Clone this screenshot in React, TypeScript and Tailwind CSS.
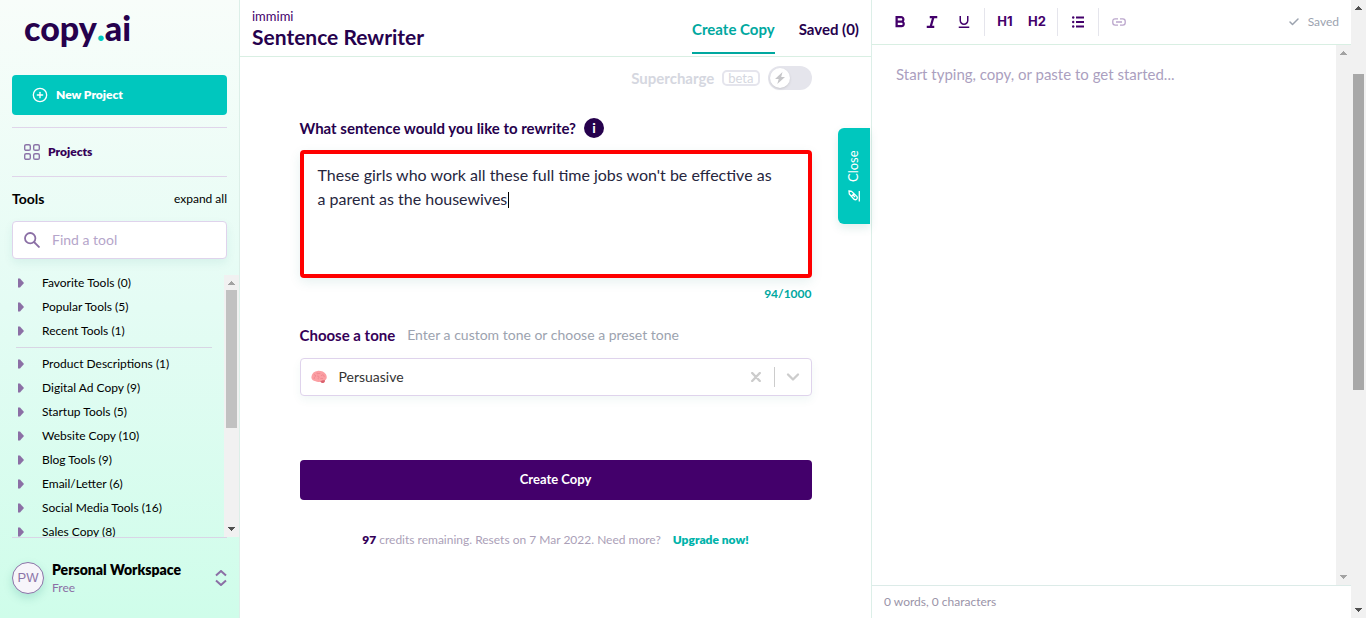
import React from "react";
import { CirclePlus, Check, ChevronDown } from "lucide-react";
import { BiBold, BiItalic, BiUnderline } from "react-icons/bi";

const toolGroups = [
  ["Favorite Tools (0)", "Popular Tools (5)", "Recent Tools (1)"],
  [
    "Product Descriptions (1)",
    "Digital Ad Copy (9)",
    "Startup Tools (5)",
    "Website Copy (10)",
    "Blog Tools (9)",
    "Email/Letter (6)",
    "Social Media Tools (16)",
    "Sales Copy (8)",
  ],
];

function Arrow({ up = false, className }: { up?: boolean; className: string }) {
  return (
    <svg viewBox="0 0 7 4" className={`h-1 w-[7px] ${className}`} shapeRendering="crispEdges" aria-hidden="true">
      <path fill="currentColor" d={up ? "M0 4h7L3.5 0z" : "M0 0h7L3.5 4z"} />
    </svg>
  );
}

function ScrollBar({ children, top, bottom }: { children?: React.ReactNode; top: string; bottom: string }) {
  return (
    <div className="flex w-[15px] shrink-0 flex-col items-center bg-[#f1f1f1]" aria-hidden="true">
      <div className="flex h-[15px] shrink-0 items-center">
        <Arrow up className={top} />
      </div>
      <div className="flex w-full flex-1 flex-col items-center">{children}</div>
      <div className="flex h-4 shrink-0 items-center">
        <Arrow className={bottom} />
      </div>
    </div>
  );
}

function Sidebar() {
  return (
    <aside className="flex w-60 shrink-0 flex-col border-r border-[#dcefe8] bg-linear-to-b from-[#f8fdfa] via-[#e4fcf4] to-[#cffdea]">
      <div className="px-3">
        <a href="#home" className="flex h-[75px] items-start px-3 pt-1.5 text-[34px] leading-[44px] font-black text-[#26014d]" aria-label="copy.ai">
          copy<span className="text-[#00c7be]">.</span>ai
        </a>
        <button className="flex h-10 w-full items-center gap-2 rounded bg-[#00c7be] px-5 text-xs font-extrabold text-white">
          <CirclePlus className="size-4" strokeWidth={2} />
          New Project
        </button>
        <a href="#projects" className="mt-3 flex h-[50px] items-center gap-2 border-y border-[#e0d5ea] px-3 text-xs font-extrabold text-[#350058]">
          <svg viewBox="0 0 16 16" className="size-4 text-[#8b74a8]" fill="none" stroke="currentColor" strokeWidth="1.4" aria-hidden="true">
            <rect x=".7" y=".7" width="5.6" height="5.6" rx="1.4" />
            <rect x="9.7" y=".7" width="5.6" height="5.6" rx="1.4" />
            <rect x=".7" y="9.7" width="5.6" height="5.6" rx="1.4" />
            <rect x="9.7" y="9.7" width="5.6" height="5.6" rx="1.4" />
          </svg>
          Projects
        </a>
        <div className="flex h-11 items-center justify-between text-black">
          <h2 className="text-sm font-bold">Tools</h2>
          <button className="text-xs">expand all</button>
        </div>
        <div className="flex h-[38px] items-center gap-3 rounded border border-[#dfd3ec] bg-white pr-3 pl-[11px] shadow-[0_4px_10px_rgba(0,120,110,0.08)]">
          <svg viewBox="0 0 16 16" className="size-4 shrink-0 text-[#8b6fa5]" fill="none" stroke="currentColor" strokeWidth="1.8" aria-hidden="true">
            <circle cx="6.2" cy="6.2" r="5.2" />
            <path d="m10 10 5.500 5.500" />
          </svg>
          <input type="search" aria-label="Find a tool" placeholder="Find a tool" className="h-full w-full min-w-0 pb-0.5 text-sm outline-none placeholder:text-[#b5a5ca]" />
        </div>
      </div>
      <div className="mt-4 flex min-h-0 flex-1">
        <nav className="flex min-h-0 flex-1 flex-col gap-2 overflow-hidden pr-3 pl-4">
          {toolGroups.map((group, index) => (
            <React.Fragment key={index}>
              {index > 0 && <hr className="border-[#d8d5e4]" />}
              {group.map((tool) => (
                <button key={tool} className="flex h-4 shrink-0 items-center gap-[18px] pl-0.5 text-left text-xs leading-4 text-black">
                  <svg viewBox="0 0 6 10" className="h-[10px] w-[6px] text-[#8b6fa5]" aria-hidden="true">
                    <path fill="currentColor" d="M0 .5h2l4 4.500-4 4.500H0z" />
                  </svg>
                  {tool}
                </button>
              ))}
            </React.Fragment>
          ))}
        </nav>
        <ScrollBar top="text-[#a3a3a3]" bottom="text-[#505050]">
          <div className="h-[138px] w-[11px] bg-[#c1c1c1]" />
        </ScrollBar>
      </div>
      <div className="px-3">
        <button className="flex h-[81px] w-full items-center gap-2 border-t border-[#d9d5e6] text-left">
          <span className="flex size-8 shrink-0 items-center justify-center rounded-full border border-[#8b74a8] bg-[#f7f5fa] font-['Liberation_Sans'] text-[13px] text-[#8b74a8] shadow-[0_4px_10px_rgba(0,120,110,0.18)]">
            PW
          </span>
          <span className="flex flex-1 flex-col">
            <span className="text-sm leading-5 font-extrabold text-black">Personal Workspace</span>
            <span className="text-xs leading-4 text-[#8b6fa5]">Free</span>
          </span>
          <svg viewBox="0 0 12 16" className="h-4 w-3 text-[#8b6fa5]" fill="none" stroke="currentColor" strokeWidth="2" aria-hidden="true">
            <path d="M1 5.500 6 1l5 4.500M1 10.500 6 15l5-4.500" />
          </svg>
        </button>
      </div>
    </aside>
  );
}

function Header() {
  return (
    <header className="flex h-[57px] shrink-0 justify-between border-b border-[#d9efe3] px-3 text-[#26014d]">
      <div className="flex flex-col pt-2">
        <a href="#immimi" className="text-[13px] leading-4 text-[#43006b]">immimi</a>
        <h1 className="text-[21px] leading-[26px] font-bold">Sentence Rewriter</h1>
      </div>
      <nav className="flex h-[54px] gap-6 text-[15px] font-bold">
        <a href="#create" className="flex items-center border-b-2 border-[#00a89f] pt-1.5 text-[#00a89f]">Create Copy</a>
        <a href="#saved" className="flex items-center border-b-2 border-transparent pt-1.5">Saved (0)</a>
      </nav>
    </header>
  );
}

function Brain() {
  return (
    <svg viewBox="0 0 16 14" className="h-[14px] w-4 shrink-0" fill="none" aria-hidden="true">
      <path fill="#fb9fa3" d="M.6 6C1 3.200 3.500 1.200 6.500.9c3.200-.3 6.800.8 8.400 3.400 1.400 2.400 1 5.200-.9 5.900-.1 1.800-1.100 3-2.400 2.800-1.100-.1-1.600-.9-2.400-1.300-1.700.6-3.400.3-4.600-.5C2 11 .300 9.200.4 7.300z" />
      <path stroke="#e5717e" strokeWidth=".5" d="M3 5c1-.8 2 .6 1.300 1.400S2.500 8 3.500 9M6 2.500c-.8 1 .5 1.500 1.200 1.200S9 3 9.300 4M6 6.500c.8-1 2-.3 2 .6S6.500 8.500 7.500 9.300M10 6c.8-.7 1-1.500 2.200-1.100s.6 1.700 1.300 2.100M9.500 8.500c.8-.5 1.500.3 2.500 0" />
      <path fill="#d9626f" d="M9.200 11.700c1.300-1.300 3-1.700 4.800-1.500-.1 1.800-1.100 3-2.400 2.800-1.100-.1-1.600-.9-2.400-1.300z" />
    </svg>
  );
}

function CopyForm() {
  return (
    <main className="relative flex min-w-0 flex-1 flex-col">
      <Header />
      <form className="mx-auto flex w-full max-w-lg flex-1 flex-col pt-[9px]" onSubmit={(e) => e.preventDefault()}>
        <div className="flex h-6 items-center justify-end gap-2 text-[#d5d7e0]">
          <span className="text-[15px] font-bold">Supercharge</span>
          <span className="flex h-4 items-center rounded-[5px] border-2 border-[#e5e5ed] px-1 text-[13px] leading-3">beta</span>
          <button type="button" role="switch" aria-checked="false" aria-label="Supercharge" className="flex h-6 w-11 items-center rounded-full bg-[#e5e5ec] px-0.5">
            <span className="flex size-5 items-center justify-center rounded-full bg-white shadow">
              <svg viewBox="0 0 10 12" className="h-3 w-[10px] text-[#c6c6c9]" aria-hidden="true">
                <path fill="currentColor" d="M7.500 0 0 7h3.700L2.300 12 10 5H6.200z" />
              </svg>
            </span>
          </button>
        </div>
        <div className="mt-7 flex h-5 items-center gap-2 text-[#26014d]">
          <label htmlFor="sentence" className="text-[15px] leading-5 font-bold">What sentence would you like to rewrite?</label>
          <button type="button" aria-label="More information" className="flex size-5 items-center justify-center rounded-full bg-[#26014d] text-sm font-bold text-white">i</button>
        </div>
        <div className="relative mt-3">
          <textarea
            id="sentence"
            defaultValue="These girls who work all these full time jobs won't be effective as a parent as the housewives"
            className="block h-32 w-full resize-none rounded border-4 border-[#ff0000] py-[9px] pr-8 pl-3.5 text-base leading-6 text-[#26263e] shadow-[0_4px_12px_rgba(0,120,110,0.1)] outline-none"
          />
          <span className="absolute top-[42px] left-[208px] h-4 w-px bg-black" />
        </div>
        <p className="mt-2 text-right text-xs leading-4 font-bold text-[#00a89f]">94/1000</p>
        <div className="mt-[23px] flex h-5 items-center gap-3">
          <label htmlFor="tone" className="text-[15px] leading-5 font-bold text-[#350058]">Choose a tone</label>
          <span className="text-sm text-[#9ca3af]">Enter a custom tone or choose a preset tone</span>
        </div>
        <div className="mt-[13px] flex h-[38px] items-center rounded border border-[#dfd3ec] bg-white pl-2.5 text-[#cccccc] shadow-[0_4px_10px_rgba(0,120,110,0.06)]">
          <Brain />
          <select id="tone" className="h-full min-w-0 flex-1 appearance-none px-3 text-sm text-[#333333] outline-none">
            <option>Persuasive</option>
          </select>
          <button type="button" aria-label="Clear tone" className="flex size-9 items-center justify-center">
            <svg viewBox="0 0 10 10" className="size-[10px]" stroke="currentColor" strokeWidth="2.400" strokeLinecap="round" aria-hidden="true">
              <path d="m1.200 1 7.600 8m0-8-7.600 8" />
            </svg>
          </button>
          <span className="h-5 w-px bg-current" />
          <span className="flex size-9 items-center justify-center">
            <ChevronDown className="size-[20px]" strokeWidth={2.800} />
          </span>
        </div>
        <button type="submit" className="mt-16 h-10 rounded bg-[#43006b] text-[13px] font-bold text-white">Create Copy</button>
        <p className="mt-8 text-center text-xs leading-4 text-[#ab9fb8]">
          <b className="font-extrabold text-[#350058]">97</b> credits remaining. Resets on 7 Mar 2022. Need more?
          <a href="#upgrade" className="ml-3 font-extrabold text-[#00b3aa]">Upgrade now!</a>
        </p>
      </form>
      <button className="absolute top-32 right-px flex h-24 w-8 rotate-180 items-center justify-center gap-2 rounded-r-md bg-[#00c7be] text-[13px] text-white shadow-[0_-4px_10px_rgba(0,120,110,0.12)] [writing-mode:vertical-rl]">
        <svg viewBox="0 0 12 12" className="size-3 rotate-180" fill="none" stroke="currentColor" strokeWidth="1.300" aria-hidden="true">
          <path d="M11.300 1v10.500M1 1l2.500.4 5.500 5.200q.8 1.400-.3 2.500t-2.500.3L1.300 4zM3.500 6.300l3-3M5 5l2 2" />
        </svg>
        Close
      </button>
    </main>
  );
}

const toolButton = "flex size-8 items-center justify-center text-[#43006b]";

function Editor() {
  return (
    <section className="flex w-[480px] shrink-0 flex-col border-l border-[#dcefe8]">
      <div className="flex h-[45px] shrink-0 items-center border-b border-[#d9efe3] pr-3 pl-3">
        <button aria-label="Bold" className={toolButton}><BiBold className="size-[18px]" /></button>
        <button aria-label="Italic" className={toolButton}><BiItalic className="size-[18px]" /></button>
        <button aria-label="Underline" className={toolButton}><BiUnderline className="size-[18px]" /></button>
        <span className="mx-1 h-7 w-px bg-[#e5e5ec]" />
        <button className={`${toolButton} font-['Inter'] text-[13px] font-bold`}>H1</button>
        <button className={`${toolButton} font-['Inter'] text-[13px] font-bold`}>H2</button>
        <span className="mx-1 h-7 w-px bg-[#e5e5ec]" />
        <button aria-label="Bulleted list" className={toolButton}>
          <svg viewBox="0 0 12 12" className="size-3" fill="currentColor" aria-hidden="true">
            <path d="M4 .5h8v2H4zM4 5h8v2H4zM4 9.500h8v2H4z" />
            <circle cx="1.200" cy="1.500" r="1.200" />
            <circle cx="1.200" cy="6" r="1.200" />
            <circle cx="1.200" cy="10.500" r="1.200" />
          </svg>
        </button>
        <span className="mx-1 h-7 w-px bg-[#e5e5ec]" />
        <button aria-label="Link" className="flex size-8 items-center justify-center text-[#baa5cc]">
          <svg viewBox="0 0 14 8" className="h-2 w-3.5" fill="none" stroke="currentColor" strokeWidth="1.300" aria-hidden="true">
            <path d="M6 .8H3.200Q.8.800.8 3.200v1.600Q.8 7.200 3.200 7.200H6M8 .8h2.800q2.400 0 2.400 2.400v1.600q0 2.400-2.400 2.400H8M4 4h6" />
          </svg>
        </button>
        <span className="ml-auto flex items-center gap-2 text-xs text-[#9ca3af]">
          <Check className="size-3" strokeWidth={3} />
          Saved
        </span>
      </div>
      <div className="flex min-h-0 flex-1">
        <textarea aria-label="Document" placeholder="Start typing, copy, or paste to get started..." className="min-w-0 flex-1 resize-none px-6 py-[17px] text-[15px] leading-6 outline-none placeholder:text-[#ab9fc0]" />
        <ScrollBar top="text-[#a3a3a3]" bottom="text-[#a3a3a3]" />
      </div>
      <div className="flex h-[33px] shrink-0 items-center border-t border-[#dcebe8] px-3 text-xs text-[#9a93a8]">0 words, 0 characters</div>
    </section>
  );
}

export default function App() {
  return (
    <div className="flex h-screen overflow-hidden bg-white font-['Lato',sans-serif]">
      <Sidebar />
      <CopyForm />
      <Editor />
      <ScrollBar top="text-[#505050]" bottom="text-[#505050]">
        <div className="mt-[59px] h-[316px] w-[11px] bg-[#a8a8a8]" />
      </ScrollBar>
    </div>
  );
}
